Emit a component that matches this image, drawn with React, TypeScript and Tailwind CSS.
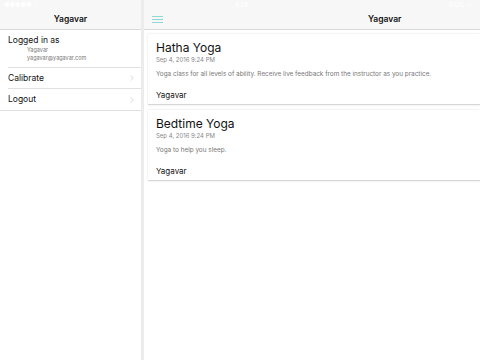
import { ChevronRight } from "lucide-react"

const font = { fontFamily: "Inter, 'Liberation Sans', sans-serif" }

const classes = [
  {
    title: "Hatha Yoga",
    date: "Sep 4, 2016 9:24 PM",
    desc: "Yoga class for all levels of ability. Receive live feedback from the instructor as you practice.",
    owner: "Yagavar",
  },
  {
    title: "Bedtime Yoga",
    date: "Sep 4, 2016 9:24 PM",
    desc: "Yoga to help you sleep.",
    owner: "Yagavar",
  },
]

const ClassCard = ({ c }: { c: (typeof classes)[number] }) => (
  <div className="bg-white border-b border-[#d6d6d6] shadow-[0_0_2px_rgba(0,0,0,0.12)] h-[71px] px-2 pt-[6px]">
    <p className="text-[12px] leading-[15px] text-[#111]">{c.title}</p>
    <p className="text-[6px] leading-[8px] text-[#888] mt-[1px]">{c.date}</p>
    <p className="text-[6.4px] leading-[8px] text-[#777] mt-[6px]">{c.desc}</p>
    <p className="text-[8px] leading-[10px] text-[#111] mt-[12px]">{c.owner}</p>
  </div>
)

const App = () => {
  return (
    <div className="w-[480px] h-[360px] flex bg-white overflow-hidden" style={font}>
      <div className="w-[141px] flex flex-col">
        <div className="h-[30px] bg-[#f7f7f7] border-b border-[#dadada] flex flex-col">
          <div className="h-[10px] px-1 text-[6px] leading-[10px] text-white">●●●●● ⌔</div>
          <div className="flex-1 flex items-center justify-center text-[8.5px] font-semibold text-[#111]">Yagavar</div>
        </div>
        <div className="px-2 pt-[5px] h-[37px] text-[#111]">
          <p className="text-[8.5px] leading-[11px]">Logged in as</p>
          <div className="pl-[19px] text-[5.5px] leading-[8px] text-[#777]">
            <p>Yagavar</p>
            <p>yagavar@yagavar.com</p>
          </div>
        </div>
        <div className="ml-2 border-t border-[#e0e0e0] h-[21px] flex items-center justify-between pr-1">
          <span className="text-[8.5px] text-[#111]">Calibrate</span>
          <ChevronRight className="size-[10px] text-[#c7c7cc]" strokeWidth={1.5} />
        </div>
        <div className="ml-2 border-t border-[#e0e0e0] h-[22px] flex items-center justify-between pr-1">
          <span className="text-[8.5px] text-[#111]">Logout</span>
          <ChevronRight className="size-[10px] text-[#c7c7cc]" strokeWidth={1.5} />
        </div>
        <div className="border-t border-[#e0e0e0]" />
      </div>
      <div className="w-[3px] bg-[#ececec]" />
      <div className="flex-1 flex flex-col">
        <div className="h-[30px] bg-[#f7f7f7] border-b border-[#dadada] flex flex-col">
          <div className="h-[10px] flex justify-between text-[6px] leading-[10px] text-white pr-2">
            <span className="ml-[91px]">9:24</span>
            <span>100% ▭</span>
          </div>
          <div className="flex-1 flex items-center">
            <svg width="11" height="7" viewBox="0 0 11 7" className="ml-2">
              <rect x="0" y="0" width="11" height="1" fill="#8fd9d5" />
              <rect x="0" y="3" width="11" height="1" fill="#8fd9d5" />
              <rect x="0" y="6" width="11" height="1" fill="#8fd9d5" />
            </svg>
            <span className="ml-[205px] text-[8.5px] font-semibold text-[#111]">Yagavar</span>
          </div>
        </div>
        <div className="flex flex-col gap-[5px] pl-[4px] pt-[4px]">
          {classes.map((c) => (
            <ClassCard key={c.title} c={c} />
          ))}
        </div>
      </div>
    </div>
  )
}

export default App
